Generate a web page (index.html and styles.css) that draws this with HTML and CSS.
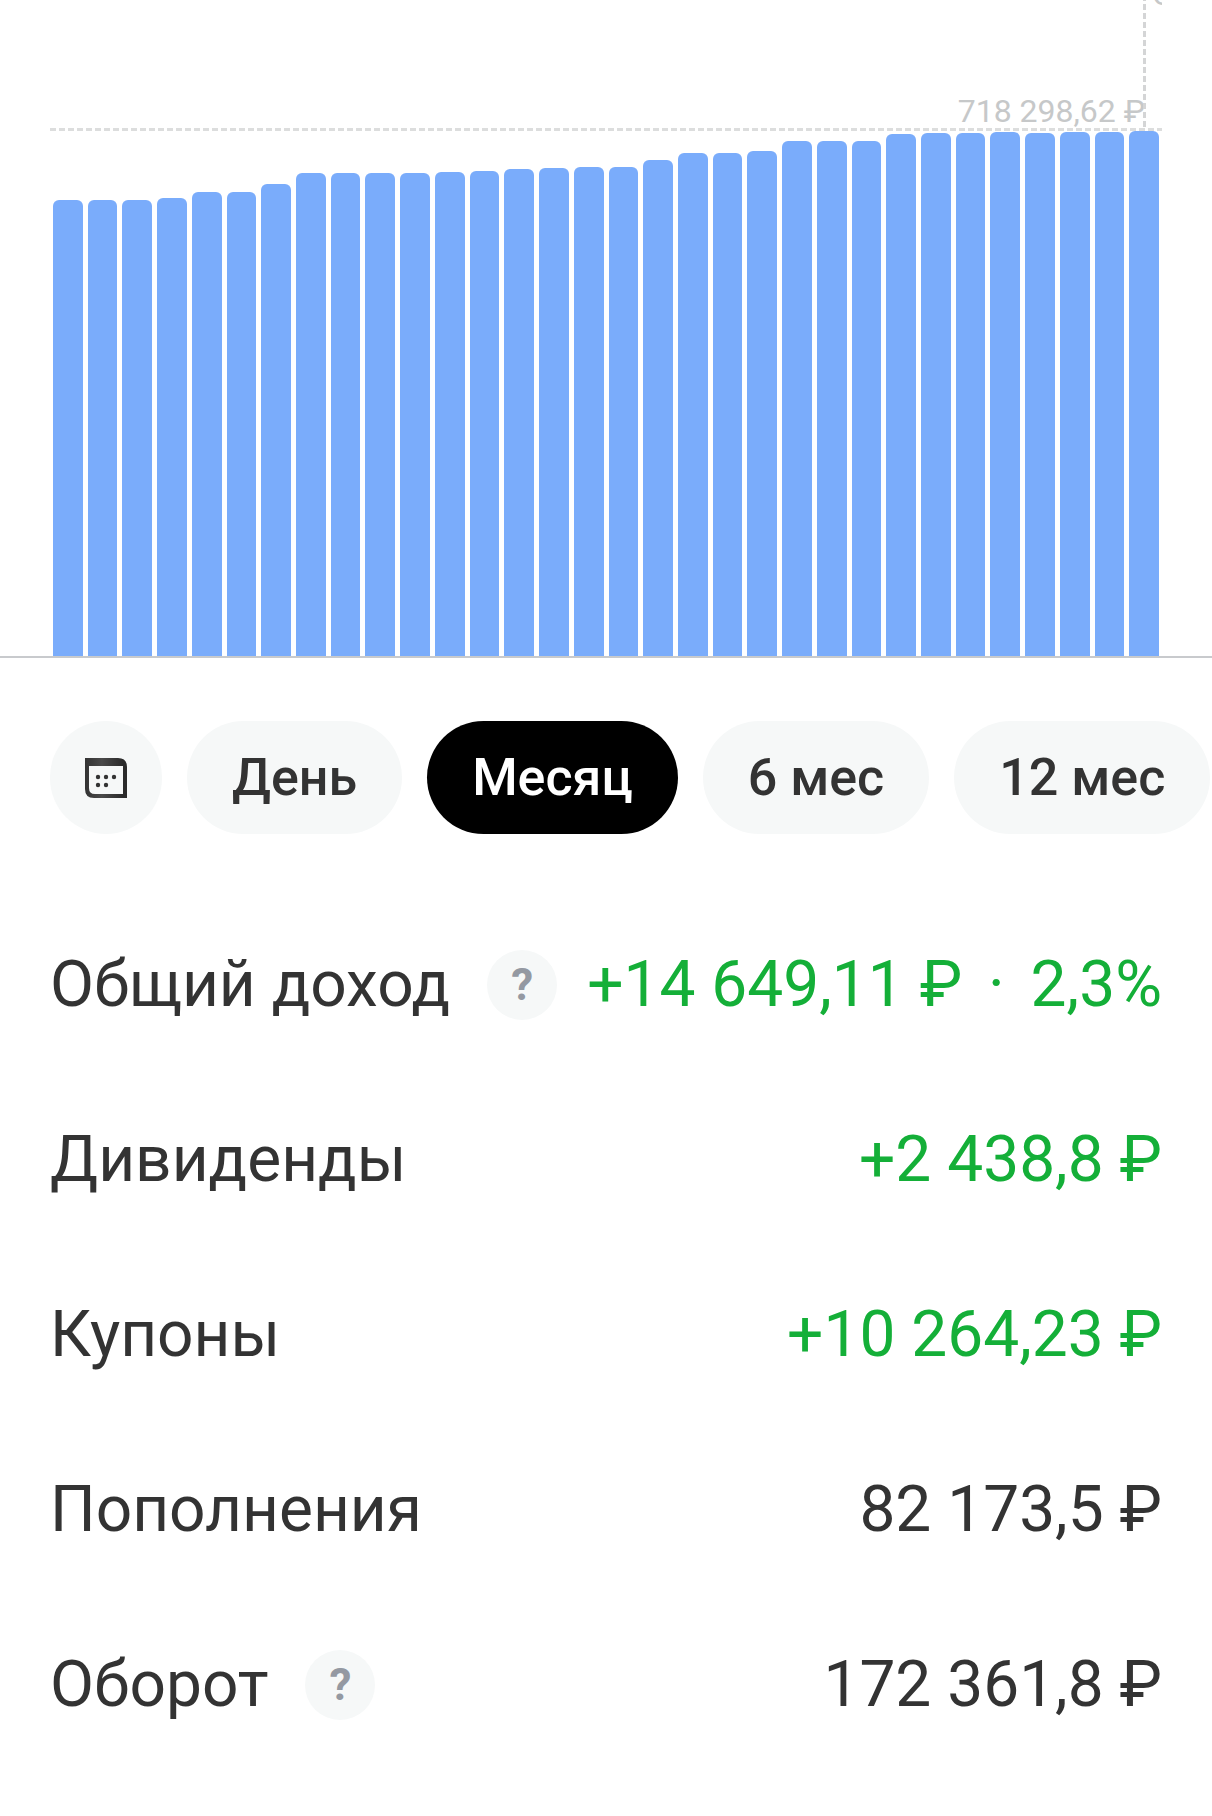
FILE: index.html
```html
<!DOCTYPE html>
<html lang="ru">
<head>
    <meta charset="UTF-8">
    <meta name="viewport" content="width=device-width, initial-scale=1.0">
    <title>Доходность портфеля</title>
    <link rel="stylesheet" href="styles.css">
</head>
<body>
    <section class="chart">
        <div class="bars" id="bars"></div>
        <div class="max-line"></div>
        <span class="max-label">718 298,62 ₽</span>
        <div class="marker-line"></div>
        <span class="marker-label">С</span>
    </section>

    <nav class="periods">
        <button type="button" class="chip chip-icon" aria-label="Выбрать даты">
            <svg width="42" height="40" viewBox="0 0 42 40">
                <defs>
                    <linearGradient id="calTop" x1="0" y1="0" x2="1" y2="0">
                        <stop offset="0" stop-color="#333333"/>
                        <stop offset="0.4" stop-color="#4a4a4a"/>
                        <stop offset="0.9" stop-color="#2b2b2b"/>
                    </linearGradient>
                </defs>
                <path fill="url(#calTop)" fill-rule="evenodd" d="M0 0H33Q42 0 42 9V40H9Q0 40 0 31ZM4 8V30Q4 36 10 36H38V8Z"/>
                <g fill="#333333">
                    <circle cx="13" cy="19" r="2.2"/>
                    <circle cx="21" cy="19" r="2.2"/>
                    <circle cx="29" cy="19" r="2.2"/>
                    <circle cx="13" cy="27" r="2.2"/>
                    <circle cx="21" cy="27" r="2.2"/>
                </g>
            </svg>
        </button>
        <button type="button" class="chip">День</button>
        <button type="button" class="chip active">Месяц</button>
        <button type="button" class="chip">6 мес</button>
        <button type="button" class="chip">12 мес</button>
    </nav>

    <dl class="stats">
        <div class="row">
            <dt>Общий доход <button type="button" class="help" aria-label="Подробнее">?</button></dt>
            <dd class="plus">+14 649,11 ₽ <span class="dot">·</span> 2,3%</dd>
        </div>
        <div class="row">
            <dt>Дивиденды</dt>
            <dd class="plus">+2 438,8 ₽</dd>
        </div>
        <div class="row">
            <dt>Купоны</dt>
            <dd class="plus">+10 264,23 ₽</dd>
        </div>
        <div class="row">
            <dt>Пополнения</dt>
            <dd>82 173,5 ₽</dd>
        </div>
        <div class="row">
            <dt>Оборот <button type="button" class="help" aria-label="Подробнее">?</button></dt>
            <dd>172 361,8 ₽</dd>
        </div>
    </dl>

    <script>
        // bar heights by day
        const values = [
            456, 456, 456, 458, 464, 464, 472, 483, 483, 483, 483,
            484, 485, 487, 488, 489, 489, 496, 503, 503, 505, 515,
            515, 515, 522, 523, 523, 524, 523, 524, 524, 525
        ];
        const bars = document.getElementById('bars');

        values.forEach((value) => {
            const bar = document.createElement('div');
            bar.className = 'bar';
            bar.style.height = value + 'px';
            bars.appendChild(bar);
        });
    </script>
</body>
</html>
```
FILE: styles.css
```css
* {
    box-sizing: border-box;
}
body {
    margin: 0;
    font-family: Roboto, "Noto Sans", sans-serif;
    color: #333333;
    background-color: #ffffff;
    overflow-x: hidden;
}
button {
    border: none;
    font-family: inherit;
    cursor: pointer;
}

/* chart */
.chart {
    position: relative;
    padding: 131px 53px 0;
    border-bottom: 2px solid #c8cacd;
    overflow: hidden;
}
.bars {
    display: flex;
    align-items: flex-end;
    gap: 5px;
}
.bar {
    flex: 1;
    background-color: #7aacfb;
    border-radius: 6px 6px 0 0;
}
.max-line {
    position: absolute;
    top: 128px;
    left: 50px;
    right: 50px;
    height: 3px;
    background: repeating-linear-gradient(to right, #dcdddd 0 6px, transparent 6px 9px);
}
.max-label {
    position: absolute;
    top: 92px;
    right: 67px;
    font-size: 32px;
    line-height: 38px;
    color: #c6c8c9;
}
.marker-line {
    position: absolute;
    top: -5px;
    right: 66px;
    width: 3px;
    height: 134px;
    background: repeating-linear-gradient(to bottom, #d4d5d6 0 6px, transparent 6px 9px);
}
.marker-label {
    position: absolute;
    top: -25px;
    right: 50px;
    width: 10px;
    overflow: hidden;
    font-size: 32px;
    line-height: 38px;
    color: #c6c8c9;
}

/* period chips */
.periods {
    display: flex;
    gap: 25px;
    padding: 63px 0 0 50px;
}
.chip {
    flex: none;
    height: 113px;
    padding: 0 45px;
    border-radius: 57px;
    font-size: 52px;
    font-weight: 500;
    white-space: nowrap;
    color: #333333;
    background-color: #f6f8f8;
}
.chip.active {
    color: #ffffff;
    background-color: #000000;
}
.chip-icon {
    display: flex;
    align-items: center;
    justify-content: center;
    width: 112px;
    padding: 0;
}

/* totals */
.stats {
    margin: 63px 0 0;
    padding: 0 50px;
}
.row {
    display: flex;
    align-items: center;
    justify-content: space-between;
    height: 175px;
    font-size: 64px;
    white-space: nowrap;
}
.row dt {
    display: flex;
    align-items: center;
    gap: 37px;
}
.row dd {
    margin: 0;
}
.plus {
    color: #14af38;
}
.dot {
    margin: 0 10px;
}
.help {
    width: 70px;
    height: 70px;
    padding: 0;
    border-radius: 50%;
    font-size: 44px;
    font-weight: 700;
    color: #9499a2;
    background-color: #f6f8f8;
}
```
